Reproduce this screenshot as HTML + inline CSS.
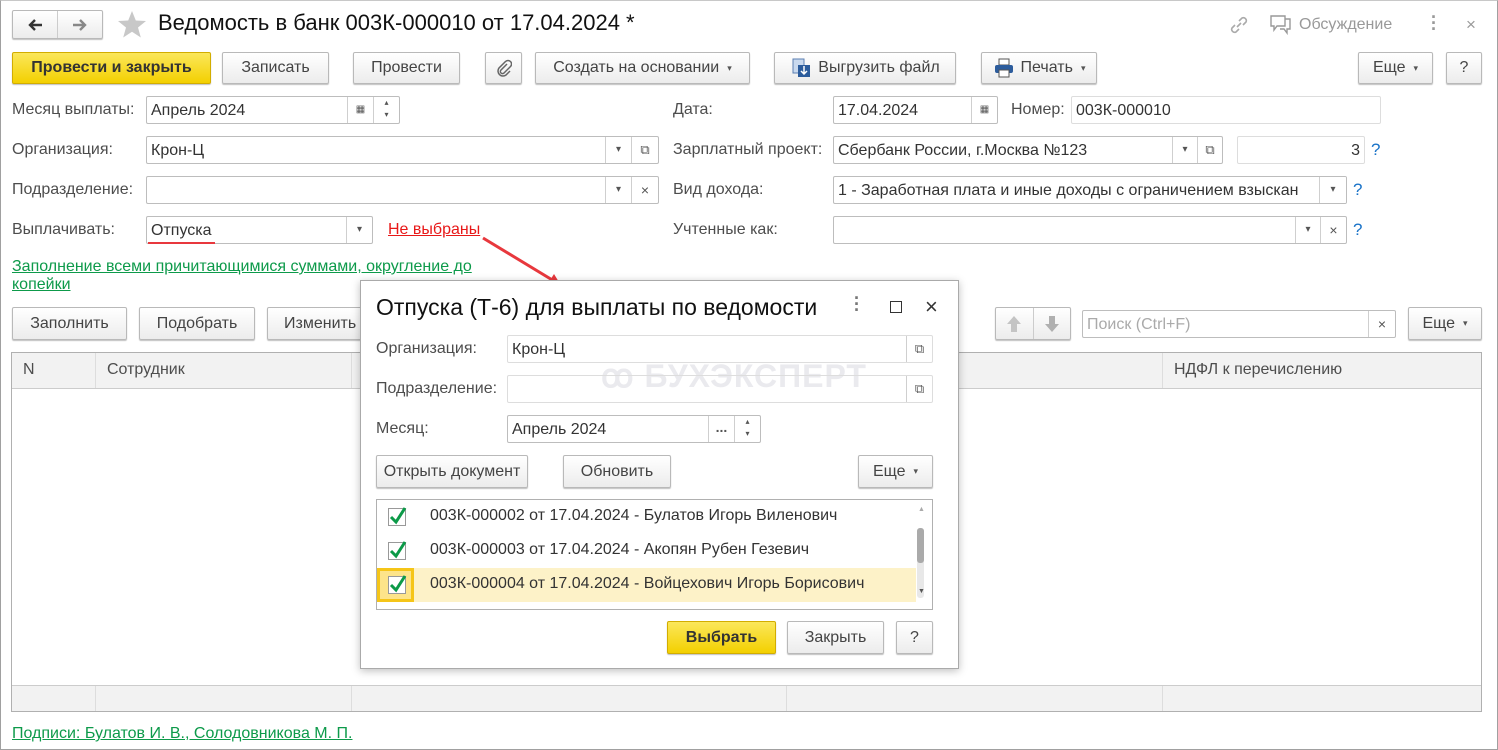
<!DOCTYPE html>
<html><head><meta charset="utf-8"><style>
*{box-sizing:border-box;margin:0;padding:0}
body{width:1498px;height:750px;position:relative;background:#fff;font-family:"Liberation Sans",Arial,sans-serif;font-size:16px;color:#333;overflow:hidden}
.a{position:absolute}
.frame{left:0;top:0;width:1498px;height:750px;border:1px solid #a0a0a0;border-top-color:#c8c8c8}
.btn{position:absolute;border:1px solid #b9b9b9;border-radius:2px;background:linear-gradient(#fff,#ececec);box-shadow:0 1px 1px rgba(0,0,0,.25);color:#444;display:flex;align-items:center;justify-content:center;white-space:nowrap}
.y{background:linear-gradient(#fbe75a,#f3d000);border-color:#d2ad00;color:#333;font-weight:bold}
.lbl{position:absolute;color:#4d4d4d;white-space:nowrap;line-height:18px}
.f{position:absolute;border:1px solid #bdbdbd;border-radius:2px;background:#fff;height:28px;line-height:27px;padding-left:4px;white-space:nowrap;overflow:hidden;color:#333}
.sb{position:absolute;top:0;height:26px;border-left:1px solid #cfcfcf;font-size:10px;color:#555;text-align:center;line-height:26px}
.dd:after{content:"▾"}
.q{position:absolute;color:#1a73c8;font-size:17px}
.th{position:absolute;border-right:1px solid #ddd;height:100%;top:0}
.dd2{font-size:9px;color:#555;margin-left:8px}
</style></head><body>
<div class="a frame"></div>

<!-- top nav -->
<div class="btn" style="left:12px;top:10px;width:91px;height:29px;padding:0">
 <span style="flex:1;height:100%;border-right:1px solid #ccc;display:flex;align-items:center;justify-content:center"><svg width="16" height="14" viewBox="0 0 16 14"><path d="M15 7H4M8 2L3 7l5 5" stroke="#333" stroke-width="2.4" fill="none"/></svg></span>
 <span style="flex:1;height:100%;display:flex;align-items:center;justify-content:center"><svg width="16" height="14" viewBox="0 0 16 14"><path d="M1 7h11M8 2l5 5-5 5" stroke="#888" stroke-width="2.4" fill="none"/></svg></span></div>
<svg class="a" style="left:117px;top:10px" width="30" height="28" viewBox="0 0 30 28"><polygon points="15,1 18.8,10.5 29,11 21,17.5 23.8,27.5 15,21.8 6.2,27.5 9,17.5 1,11 11.2,10.5" fill="#c8c8c8"/></svg>
<div class="a" style="left:158px;top:10px;font-size:22px;color:#111;white-space:nowrap">Ведомость в банк 003К-000010 от 17.04.2024 *</div>
<svg class="a" style="left:1228px;top:14px" width="22" height="22" viewBox="0 0 22 22" fill="none" stroke="#aaa" stroke-width="1.6"><path d="M9 13l4-4M7 11l-3 3a3 3 0 004 4l3-3M15 11l3-3a3 3 0 00-4-4l-3 3"/></svg>
<svg class="a" style="left:1270px;top:15px" width="22" height="20" viewBox="0 0 22 20" fill="none" stroke="#999" stroke-width="1.4"><path d="M1 1h14v10H7l-3 4v-4H1z"/><path d="M15 4h5v10h-3v4l-3-4h-4"/></svg>
<div class="a" style="left:1299px;top:16px;color:#999">Обсуждение</div>
<div class="a" style="left:1431px;top:14px;color:#999;font-size:18px;font-weight:bold;line-height:6px;width:6px">·<br>·<br>·</div>
<div class="a" style="left:1466px;top:15px;color:#999;font-size:17px">×</div>

<!-- toolbar -->
<div class="btn y" style="left:12px;top:52px;width:199px;height:32px">Провести и закрыть</div>
<div class="btn" style="left:222px;top:52px;width:107px;height:32px">Записать</div>
<div class="btn" style="left:353px;top:52px;width:107px;height:32px">Провести</div>
<div class="btn" style="left:485px;top:52px;width:37px;height:32px"><svg width="16" height="18" viewBox="0 0 16 18" fill="none" stroke="#666" stroke-width="1.5"><path d="M11 5l-6 6a2 2 0 003 3l6.5-6.5a3.5 3.5 0 00-5-5L3 9a5 5 0 007 7l4-4"/></svg></div>
<div class="btn" style="left:535px;top:52px;width:215px;height:32px">Создать на основании<span class="dd2">▾</span></div>
<div class="btn" style="left:774px;top:52px;width:182px;height:32px"><svg width="22" height="22" viewBox="0 0 22 22" style="margin-right:6px"><rect x="3" y="2" width="11" height="14" fill="#c9d9ee" stroke="#5b7fb2"/><rect x="8" y="8" width="12" height="12" fill="#2c5c9c"/><path d="M14 9v8m-3-3l3 3 3-3" stroke="#fff" stroke-width="1.5" fill="none"/></svg>Выгрузить файл</div>
<div class="btn" style="left:981px;top:52px;width:116px;height:32px"><svg width="22" height="20" viewBox="0 0 22 20" style="margin-right:6px"><rect x="6" y="1" width="10" height="6" fill="#fff" stroke="#555"/><rect x="2" y="7" width="18" height="8" rx="2" fill="#2c5c9c"/><rect x="6" y="12" width="10" height="7" fill="#fff" stroke="#555"/></svg>Печать<span class="dd2">▾</span></div>
<div class="btn" style="left:1358px;top:52px;width:75px;height:32px">Еще<span class="dd2">▾</span></div>
<div class="btn" style="left:1446px;top:52px;width:36px;height:32px">?</div>

<!-- fields left -->
<div class="lbl" style="left:12px;top:101px">Месяц выплаты:</div>
<div class="f" style="left:146px;top:96px;width:254px">Апрель 2024
 <div class="sb" style="left:200px;width:26px">▦</div><div class="sb" style="left:226px;width:26px;line-height:12px;font-size:8px">▴<br>▾</div></div>
<div class="lbl" style="left:12px;top:141px">Организация:</div>
<div class="f" style="left:146px;top:136px;width:513px">Крон-Ц
 <div class="sb dd" style="left:458px;width:26px"></div><div class="sb" style="left:484px;width:27px;font-size:13px">⧉</div></div>
<div class="lbl" style="left:12px;top:181px">Подразделение:</div>
<div class="f" style="left:146px;top:176px;width:513px">
 <div class="sb dd" style="left:458px;width:26px"></div><div class="sb" style="left:484px;width:27px;font-size:14px">×</div></div>
<div class="lbl" style="left:12px;top:221px">Выплачивать:</div>
<div class="f" style="left:146px;top:216px;width:227px">Отпуска
 <div class="sb dd" style="left:199px;width:26px"></div></div>
<div class="a" style="left:148px;top:242px;width:67px;height:2px;background:#e8383d"></div>
<div class="a" style="left:388px;top:221px;color:#e81818;text-decoration:underline">Не выбраны</div>
<div class="a" style="left:12px;top:258px;color:#0d9a4a;text-decoration:underline;line-height:18px">Заполнение всеми причитающимися суммами, округление до<br>копейки</div>

<!-- fields right -->
<div class="lbl" style="left:673px;top:101px">Дата:</div>
<div class="f" style="left:833px;top:96px;width:165px">17.04.2024<div class="sb" style="left:137px;width:26px">▦</div></div>
<div class="lbl" style="left:1011px;top:101px">Номер:</div>
<div class="f" style="left:1071px;top:96px;width:310px;border-color:#ddd">003К-000010</div>
<div class="lbl" style="left:673px;top:141px">Зарплатный проект:</div>
<div class="f" style="left:833px;top:136px;width:390px">Сбербанк России, г.Москва №123
 <div class="sb dd" style="left:338px;width:25px"></div><div class="sb" style="left:363px;width:25px;font-size:13px">⧉</div></div>
<div class="f" style="left:1237px;top:136px;width:128px;border-color:#ddd;text-align:right;padding-right:4px">3</div>
<div class="q" style="left:1371px;top:140px">?</div>
<div class="lbl" style="left:673px;top:181px">Вид дохода:</div>
<div class="f" style="left:833px;top:176px;width:514px">1 - Заработная плата и иные доходы с ограничением взыскан
 <div class="sb dd" style="left:485px;width:27px;background:#fff"></div></div>
<div class="q" style="left:1353px;top:180px">?</div>
<div class="lbl" style="left:673px;top:221px">Учтенные как:</div>
<div class="f" style="left:833px;top:216px;width:514px">
 <div class="sb dd" style="left:461px;width:25px"></div><div class="sb" style="left:486px;width:26px;font-size:14px">×</div></div>
<div class="q" style="left:1353px;top:220px">?</div>

<!-- table toolbar -->
<div class="btn" style="left:12px;top:307px;width:115px;height:33px">Заполнить</div>
<div class="btn" style="left:139px;top:307px;width:116px;height:33px">Подобрать</div>
<div class="btn" style="left:267px;top:307px;width:110px;height:33px;justify-content:flex-start;padding-left:16px">Изменить</div>
<div class="btn" style="left:995px;top:307px;width:76px;height:33px;padding:0">
 <span style="flex:1;height:100%;border-right:1px solid #ccc;display:flex;align-items:center;justify-content:center"><svg width="16" height="18" viewBox="0 0 16 18"><path d="M8 1L1 9h4v8h6V9h4z" fill="#c4c4c4"/></svg></span>
 <span style="flex:1;height:100%;display:flex;align-items:center;justify-content:center"><svg width="16" height="18" viewBox="0 0 16 18"><path d="M8 17L1 9h4V1h6v8h4z" fill="#b0b0b0"/></svg></span></div>
<div class="f" style="left:1082px;top:310px;width:314px;color:#aaa">Поиск (Ctrl+F)<div class="sb" style="left:285px;width:27px;font-size:14px;color:#555">×</div></div>
<div class="btn" style="left:1408px;top:307px;width:74px;height:33px">Еще<span class="dd2">▾</span></div>

<!-- table -->
<div class="a" style="left:11px;top:352px;width:1471px;height:360px;border:1px solid #b0b0b0">
 <div class="a" style="left:0;top:0;width:100%;height:36px;background:#f2f2f2;border-bottom:1px solid #ccc">
  <div class="th" style="left:83px"></div><div class="th" style="left:339px"></div><div class="th" style="left:774px"></div><div class="th" style="left:1150px"></div>
  <div class="a" style="left:11px;top:8px;color:#4d4d4d">N</div>
  <div class="a" style="left:95px;top:8px;color:#4d4d4d">Сотрудник</div>
  <div class="a" style="left:1162px;top:8px;color:#4d4d4d">НДФЛ к перечислению</div>
 </div>
 <div class="a" style="left:0;top:332px;width:100%;height:26px;background:#f2f2f2;border-top:1px solid #ccc">
  <div class="th" style="left:83px"></div><div class="th" style="left:339px"></div><div class="th" style="left:774px"></div><div class="th" style="left:1150px"></div>
 </div>
</div>
<div class="a" style="left:12px;top:725px;color:#0d9a4a;text-decoration:underline">Подписи: Булатов И. В., Солодовникова М. П.</div>

<!-- arrow -->
<svg class="a" style="left:470px;top:230px" width="100" height="65" viewBox="0 0 100 65"><line x1="13" y1="8" x2="84" y2="51" stroke="#e8383d" stroke-width="3"/><polygon points="92,57 77,55 84,44" fill="#e8383d"/></svg>

<!-- dialog -->
<div class="a" style="left:360px;top:280px;width:599px;height:389px;background:#fff;border:1px solid #aaa;box-shadow:0 2px 8px rgba(0,0,0,.25)">
 <div class="a" style="left:15px;top:13px;font-size:23px;color:#111;white-space:nowrap">Отпуска (Т-6) для выплаты по ведомости</div>
 <div class="a" style="left:493px;top:14px;color:#777;font-size:18px;font-weight:bold;line-height:6px">·<br>·<br>·</div>
 <div class="a" style="left:529px;top:20px;width:12px;height:12px;border:1.5px solid #333"></div>
 <div class="a" style="left:564px;top:13px;font-size:22px;color:#333">×</div>
 <div class="a" style="left:240px;top:76px;font-size:32px;font-weight:bold;color:#eaeaee;white-space:nowrap;letter-spacing:1px">ꝏ БУХЭКСПЕРТ</div>
 <div class="lbl" style="left:15px;top:59px">Организация:</div>
 <div class="f" style="left:146px;top:54px;width:426px;background:transparent;border-color:#ddd">Крон-Ц<div class="sb" style="left:398px;width:26px;font-size:13px">⧉</div></div>
 <div class="lbl" style="left:15px;top:99px">Подразделение:</div>
 <div class="f" style="left:146px;top:94px;width:426px;background:transparent;border-color:#ddd"><div class="sb" style="left:398px;width:26px;font-size:13px">⧉</div></div>
 <div class="lbl" style="left:15px;top:139px">Месяц:</div>
 <div class="f" style="left:146px;top:134px;width:254px">Апрель 2024<div class="sb" style="left:200px;width:26px;font-size:14px;font-weight:bold;line-height:22px">...</div><div class="sb" style="left:226px;width:26px;line-height:12px;font-size:8px">▴<br>▾</div></div>
 <div class="btn" style="left:15px;top:174px;width:152px;height:33px">Открыть документ</div>
 <div class="btn" style="left:202px;top:174px;width:108px;height:33px">Обновить</div>
 <div class="btn" style="left:497px;top:174px;width:75px;height:33px">Еще<span class="dd2">▾</span></div>
 <div class="a" style="left:15px;top:218px;width:557px;height:111px;border:1px solid #b0b0b0;overflow:hidden">
  <div class="a" style="left:0;top:68px;width:539px;height:34px;background:#fdf2c8"></div>
  <div class="a" style="left:0;top:68px;width:37px;height:34px;border:3px solid #f5c518;background:#fde48a"></div>
  <div class="a" style="left:540px;top:28px;width:7px;height:70px;background:#e8e8e8;border-radius:3px"></div>
  <div class="a" style="left:540px;top:28px;width:7px;height:35px;background:#aaa;border-radius:3px"></div>
  <div class="a" style="left:541px;top:6px;font-size:7px;color:#aaa">▲</div>
  <div class="a" style="left:541px;top:88px;font-size:7px;color:#555">▼</div>
  <div class="a" style="left:11px;top:8px;width:18px;height:18px;border:1px solid #999;background:#fff"></div>
  <div class="a" style="left:11px;top:42px;width:18px;height:18px;border:1px solid #999;background:#fff"></div>
  <div class="a" style="left:11px;top:76px;width:18px;height:18px;border:1px solid #999;background:#fff"></div>
  <svg class="a" style="left:11px;top:0" width="24" height="100" viewBox="0 0 24 100" fill="none" stroke="#0c9a48" stroke-width="3"><path d="M3 17l5 5 9-14M3 51l5 5 9-14M3 85l5 5 9-14"/></svg>
  <div class="a" style="left:53px;top:7px;white-space:nowrap">003К-000002 от 17.04.2024 - Булатов Игорь Виленович</div>
  <div class="a" style="left:53px;top:41px;white-space:nowrap">003К-000003 от 17.04.2024 - Акопян Рубен Гезевич</div>
  <div class="a" style="left:53px;top:75px;white-space:nowrap">003К-000004 от 17.04.2024 - Войцехович Игорь Борисович</div>
 </div>
 <div class="btn y" style="left:306px;top:340px;width:109px;height:33px">Выбрать</div>
 <div class="btn" style="left:426px;top:340px;width:97px;height:33px">Закрыть</div>
 <div class="btn" style="left:535px;top:340px;width:37px;height:33px">?</div>
</div>
</body></html>
